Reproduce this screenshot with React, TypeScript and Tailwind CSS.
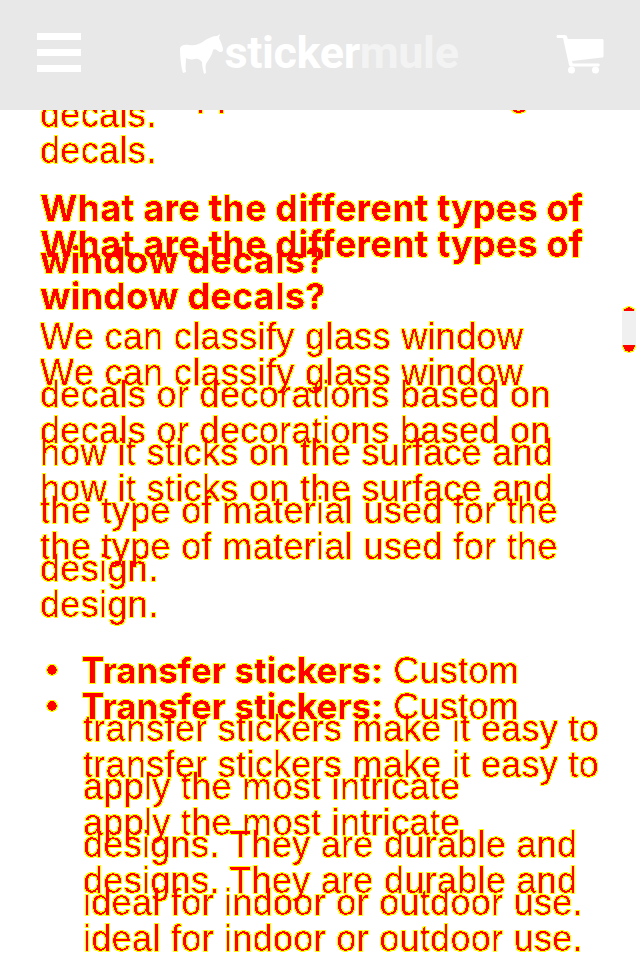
import React from 'react';

// one pass of the article text; it gets drawn twice, 36px apart
const ArticleText: React.FC = () => (
  <div className="w-[600px] pl-10 pt-[28px] font-['Liberation_Sans',sans-serif] text-[36px] leading-[58px] tracking-[0.35px] text-[#ff0000]">
    <p>
      <span className="whitespace-nowrap">Custom appeal on windows, glass</span> decals.
    </p>
    <h2 className="mt-[38px] font-['Inter',sans-serif] text-[36px] font-bold leading-[52px] tracking-[0.2px]">
      What are the different types of window decals?
    </h2>
    <p className="mt-[22px]">
      We can classify glass window decals or decorations based on how it sticks on the surface and the type of
      material used for the design.
    </p>
    <ul className="mt-[43px] tracking-[0.3px]">
      <li className="flex">
        <span className="ml-[7px] mt-[24px] h-[10px] w-[10px] shrink-0 rounded-full bg-[#ff0000]" />
        <div className="ml-[26px]">
          <strong className="-ml-[2px] font-['Inter',sans-serif] text-[35px] font-bold tracking-normal">Transfer stickers:</strong>{' '}
          Custom transfer stickers make it easy to apply the most intricate designs. They are durable and ideal for
          indoor or outdoor use.
        </div>
      </li>
    </ul>
  </div>
);

const Logo: React.FC = () => (
  <div className="-ml-[3px] -mt-[1px] flex items-center">
    <svg viewBox="176 30 48 45" className="h-[45px] w-[48px] fill-white">
      <path d="M181 46C182 43 186 42 190 43C196 44 201 42 205 39C209 36 214 34 218 34L221 32L220 36C222 40 224 45 224 48C224 50 221 51 219 49C217 47 215 47 214 48C213 54 209 58 207 62C206 65 207 68 207 71L205 72C204 68 203 64 203 60C201 58 199 56 196 57C192 58 189 57 187 56C187 61 186 66 187 70L184 71C182 65 181 55 181 46Z" />
    </svg>
    <span className="-mt-[4px] ml-[1px] font-['Roboto',sans-serif] text-[45px] font-bold leading-none tracking-[-0.4px] text-white">
      sticker<span className="text-white/50">mule</span>
    </span>
  </div>
);

const CartIcon: React.FC = () => (
  <svg viewBox="556 36 50 44" className="h-[44px] w-[50px] fill-white">
    <path d="M558 38H565C566.5 38 567 39 567.4 40.5L567.8 42H602C603 42 603.5 42.6 603.5 43.5V59C603.5 60 603 60.5 602 60.6L572 64L572.8 66.500H598C599.200 66.500 599.800 67.200 599.800 68C599.800 68.800 599.200 69.500 598 69.500H571C569.800 69.500 569.200 68.800 569 68L563 41H558C557 41 556.500 40.300 556.500 39.500C556.500 38.700 557 38 558 38Z" />
    <circle cx="571.500" cy="73" r="3.500" />
    <circle cx="595.500" cy="73" r="3.500" />
  </svg>
);

export default function App() {
  return (
    <div className="relative h-[959px] w-[640px] overflow-hidden bg-white">
      {/* hard edged red text with a yellow rim */}
      <svg className="absolute h-0 w-0">
        <filter id="rim" x="-5%" y="-5%" width="110%" height="110%" colorInterpolationFilters="sRGB">
          <feComponentTransfer in="SourceAlpha" result="hard">
            <feFuncA type="discrete" tableValues="0 0 0 1" />
          </feComponentTransfer>
          <feMorphology in="hard" operator="dilate" radius="1" result="wide" />
          <feFlood floodColor="#ffff00" />
          <feComposite in2="wide" operator="in" result="rim" />
          <feFlood floodColor="#ff0000" />
          <feComposite in2="hard" operator="in" result="fill" />
          <feMerge>
            <feMergeNode in="rim" />
            <feMergeNode in="fill" />
          </feMerge>
        </filter>
      </svg>

      <div className="relative [filter:url(#rim)]">
        <ArticleText />
        <div className="absolute left-0 top-9 w-full">
          <ArticleText />
        </div>
        <div className="absolute left-[623px] top-[307px] h-[45px] w-[12px] rounded-full bg-[#ff0000]" />
      </div>

      {/* scrollbar thumb */}
      <div className="absolute left-[622px] top-[311px] h-[34px] w-[14px] bg-[#f0f0f0]" />

      <header className="absolute inset-x-0 top-0 flex h-[110px] items-start justify-between bg-[#e8e8e8] pl-[37px] pr-[34px] pt-[33px]">
        <div className="flex w-[44px] flex-col gap-[9px]">
          <div className="h-[7px] bg-white" />
          <div className="h-[7px] bg-white" />
          <div className="h-[7px] bg-white" />
        </div>
        <Logo />
        <CartIcon />
      </header>
    </div>
  );
}
